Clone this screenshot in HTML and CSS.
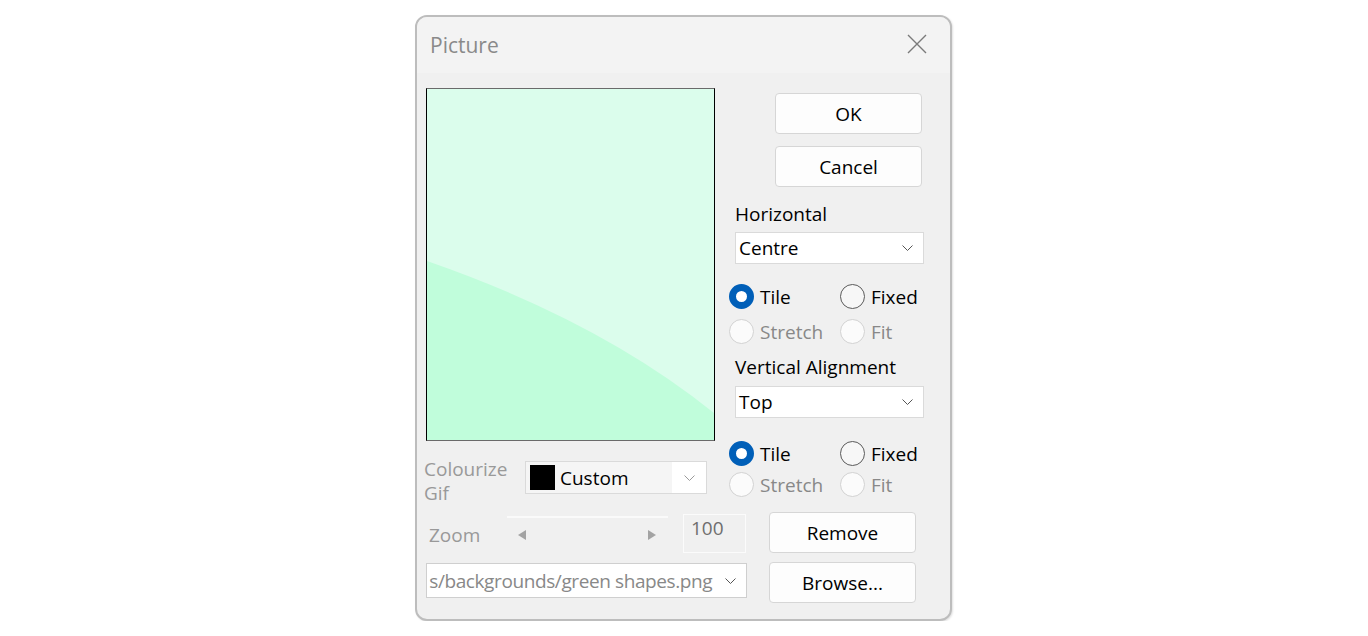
FILE: index.html
```html
<!DOCTYPE html>
<html lang="en">
<head>
  <meta charset="UTF-8">
  <meta name="viewport" content="width=device-width, initial-scale=1.0">
  <title>Picture</title>
  <link rel="stylesheet" href="styles.css">
</head>
<body>
  <div class="dialog">
    <!-- Title Bar -->
    <div class="titlebar">
      <span class="title">Picture</span>
      <svg class="close" width="20" height="20" viewBox="0 0 20 20">
        <path d="M1 1 L19 19 M19 1 L1 19" stroke="#7a7a7a" stroke-width="1.4" fill="none"/>
      </svg>
    </div>

    <div class="content">
      <div class="top">
        <!-- Preview + Colourize -->
        <div class="left">
          <div class="preview">
            <svg width="287" height="351" viewBox="0 0 287 351">
              <path d="M0 172 Q173 232 287 324 V351 H0 Z" fill="#c0fddb"/>
            </svg>
          </div>
          <div class="colourize">
            <span class="colourize-label">Colourize<br>Gif</span>
            <div class="colour-select">
              <span class="swatch"></span>
              <span class="colour-name">Custom</span>
              <span class="colour-arrow">
                <svg width="11" height="6" viewBox="0 0 11 6"><path d="M0.5 0.5 L5.5 5.5 L10.5 0.5" stroke="#9a9a9a" fill="none"/></svg>
              </span>
            </div>
          </div>
        </div>

        <!-- Options -->
        <div class="right">
          <button class="btn btn-ok">OK</button>
          <button class="btn btn-cancel">Cancel</button>

          <div class="group-label label-h">Horizontal</div>
          <div class="select select-h">
            <span>Centre</span>
            <svg width="11" height="6" viewBox="0 0 11 6"><path d="M0.5 0.5 L5.5 5.5 L10.5 0.5" stroke="#555" fill="none"/></svg>
          </div>
          <div class="radios radios-h">
            <label class="radio"><span class="dot checked"></span>Tile</label>
            <label class="radio"><span class="dot"></span>Fixed</label>
            <label class="radio disabled"><span class="dot"></span>Stretch</label>
            <label class="radio disabled"><span class="dot"></span>Fit</label>
          </div>

          <div class="group-label label-v">Vertical Alignment</div>
          <div class="select select-v">
            <span>Top</span>
            <svg width="11" height="6" viewBox="0 0 11 6"><path d="M0.5 0.5 L5.5 5.5 L10.5 0.5" stroke="#555" fill="none"/></svg>
          </div>
          <div class="radios radios-v">
            <label class="radio"><span class="dot checked"></span>Tile</label>
            <label class="radio"><span class="dot"></span>Fixed</label>
            <label class="radio disabled"><span class="dot"></span>Stretch</label>
            <label class="radio disabled"><span class="dot"></span>Fit</label>
          </div>
        </div>
      </div>

      <!-- Zoom Row -->
      <div class="row row-zoom">
        <div class="row-left">
          <span class="zoom-label">Zoom</span>
          <div class="scrollbar">
            <span class="arrow arrow-left"></span>
            <span class="arrow arrow-right"></span>
          </div>
          <div class="zoom-value">100</div>
        </div>
        <button class="btn">Remove</button>
      </div>

      <!-- File Row -->
      <div class="row row-file">
        <div class="row-left">
          <div class="path-select">
            <div class="path-text"><span>s/backgrounds/green shapes.png</span></div>
            <span class="path-arrow">
              <svg width="11" height="6" viewBox="0 0 11 6"><path d="M0.5 0.5 L5.5 5.5 L10.5 0.5" stroke="#555" fill="none"/></svg>
            </span>
          </div>
        </div>
        <button class="btn">Browse...</button>
      </div>
    </div>
  </div>
</body>
</html>
```

FILE: styles.css
```css
/* General */
body {
  margin: 0;
  background: #fff;
  font-family: 'Open Sans', 'Noto Sans', sans-serif;
  font-size: 19px;
  color: #000;
}

.dialog {
  width: 537px;
  height: 606px;
  margin: 15px 0 0 415px;
  box-sizing: border-box;
  border: 2px solid #bdbdbd;
  border-radius: 12px;
  background: #f0f0f0;
  overflow: hidden;
  box-shadow: 1px 1px 2px rgba(0, 0, 0, 0.12);
}

/* Title Bar */
.titlebar {
  height: 56px;
  background: #f3f3f3;
  display: flex;
  align-items: center;
  justify-content: space-between;
  padding: 0 23px 0 13px;
}

.title {
  font-size: 21px;
  color: #8a8a8a;
  margin-top: -1px;
}

.close {
  display: block;
  margin-top: -2px;
}

/* Content */
.content {
  padding: 15px 0 0 9px;
}

.top {
  display: flex;
  gap: 14px;
  height: 413px;
}

.left {
  width: 289px;
}

.preview {
  width: 289px;
  height: 353px;
  box-sizing: border-box;
  border: 1px solid #000;
  border-top-color: #6a6a6a;
  border-bottom-color: #6a6a6a;
  background: #dbfdec;
}

.preview svg {
  display: block;
}

.colourize {
  display: flex;
  align-items: flex-start;
  margin-top: 20px;
}

.colourize-label {
  width: 101px;
  margin-left: -2px;
  margin-top: -4px;
  line-height: 24px;
  color: #999;
}

.colour-select {
  width: 182px;
  height: 33px;
  box-sizing: border-box;
  border: 1px solid #dadada;
  background: #f5f5f5;
  display: flex;
  align-items: center;
}

.swatch {
  width: 25px;
  height: 25px;
  background: #000;
  margin-left: 4px;
}

.colour-name {
  margin-left: 5px;
}

.colour-arrow {
  margin-left: auto;
  width: 34px;
  height: 100%;
  background: #fff;
  display: flex;
  align-items: center;
  justify-content: center;
}

/* Right Column */
.right {
  width: 195px;
  display: flex;
  flex-direction: column;
}

.btn {
  width: 147px;
  height: 41px;
  box-sizing: border-box;
  border: 1px solid #d6d6d6;
  border-radius: 4px;
  background: #fdfdfd;
  font-family: inherit;
  font-size: 19px;
  color: #000;
  padding: 0;
}

.btn-ok {
  margin: 5px 0 0 46px;
}

.btn-cancel {
  margin: 12px 0 0 46px;
}

.group-label {
  line-height: 26px;
  margin-left: 6px;
}

.label-h {
  margin-top: 14px;
}

.label-v {
  margin-top: 5px;
}

.select {
  width: 189px;
  height: 32px;
  box-sizing: border-box;
  margin-left: 6px;
  border: 1px solid #dadada;
  background: #fff;
  display: flex;
  align-items: center;
  justify-content: space-between;
  padding: 0 10px 0 3px;
}

.select-h {
  margin-top: 5px;
}

.select-v {
  margin-top: 6px;
}

/* Radio Groups */
.radios {
  display: grid;
  grid-template-columns: 111px auto;
}

.radios-h {
  margin-top: 15px;
  grid-auto-rows: 35px;
}

.radios-v {
  margin-top: 20px;
  grid-auto-rows: 31px;
}

.radio {
  display: flex;
  align-items: center;
  gap: 6px;
}

.dot {
  width: 25px;
  height: 25px;
  box-sizing: border-box;
  border-radius: 50%;
  border: 1.5px solid #5a5a5a;
  background: #f7f7f7;
}

.dot.checked {
  border: 7.5px solid #005fb8;
  background: #fff;
}

.radio.disabled {
  color: #888;
}

.radio.disabled .dot {
  border-color: #d2d2d2;
  background: #fbfbfb;
}

/* Bottom Rows */
.row {
  display: flex;
  align-items: flex-start;
}

.row-zoom {
  margin-top: 11px;
}

.row-file {
  margin-top: 9px;
}

.row-left {
  width: 321px;
  margin-right: 22px;
  display: flex;
  align-items: flex-start;
}

.zoom-label {
  width: 78px;
  margin-left: 3px;
  margin-top: 10px;
  line-height: 26px;
  color: #999;
}

.scrollbar {
  width: 161px;
  height: 35px;
  box-sizing: border-box;
  margin-top: 4px;
  border-top: 2px solid #fafafa;
  display: flex;
  align-items: center;
  justify-content: space-between;
  padding: 0 12px 0 11px;
}

.arrow {
  width: 0;
  height: 0;
  border-top: 5px solid transparent;
  border-bottom: 5px solid transparent;
}

.arrow-left {
  border-right: 8px solid #a3a3a3;
}

.arrow-right {
  border-left: 8px solid #a3a3a3;
}

.zoom-value {
  width: 63px;
  height: 39px;
  box-sizing: border-box;
  margin: 2px 0 0 15px;
  border: 1px solid #fbfbfb;
  padding-left: 7px;
  line-height: 26px;
  color: #6e6e6e;
}

.path-select {
  width: 321px;
  height: 35px;
  box-sizing: border-box;
  margin-top: 1px;
  border: 1px solid #cfcfcf;
  background: #fff;
  display: flex;
  align-items: center;
}

.path-text {
  width: 287px;
  display: flex;
  justify-content: flex-end;
  white-space: nowrap;
  color: #888;
  padding-right: 2px;
  letter-spacing: -0.4px;
}

.path-arrow {
  margin-left: auto;
  width: 32px;
  display: flex;
  justify-content: center;
}
```
